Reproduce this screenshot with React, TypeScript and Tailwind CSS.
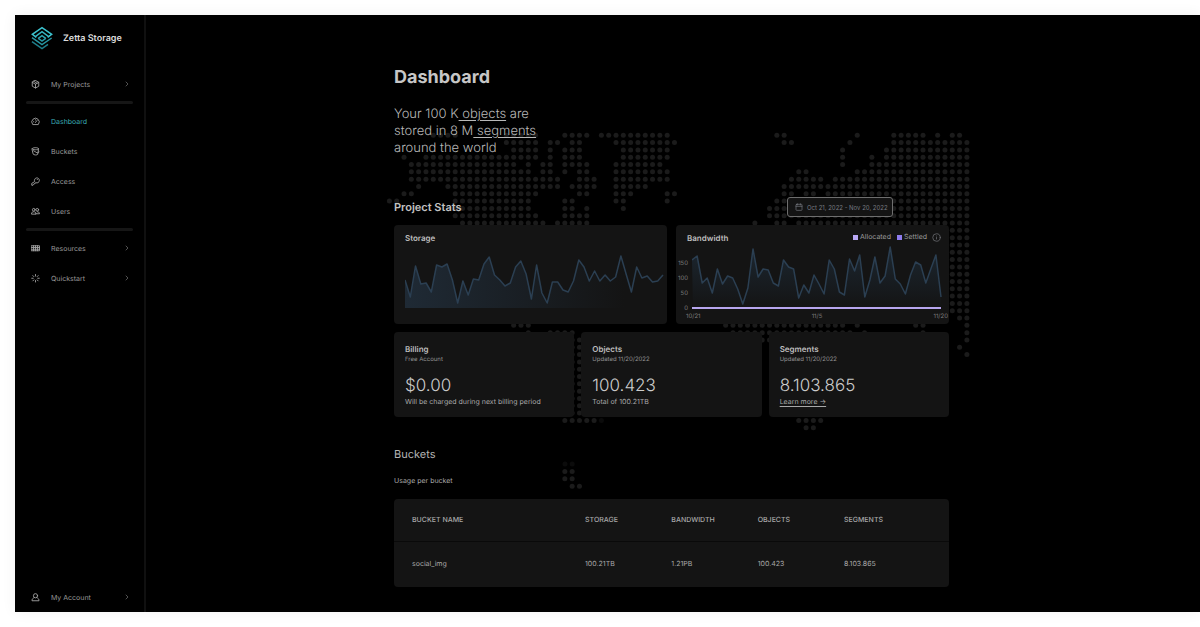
import type { ReactNode } from "react";
import { ChevronRight, Calendar, Info } from "lucide-react";

const storageData = [
  28, 11, 42, 24, 25, 16, 43, 41, 44, 28, 5, 27, 13, 29, 28, 44, 51, 33, 28, 22, 25, 41, 47, 34, 9,
  43, 15, 5, 26, 26, 18, 16, 27, 48, 41, 27, 37, 27, 33, 27, 31, 52, 34, 16, 41, 30, 32, 26, 27, 33,
];

const bandwidthData = [
  48, 52, 25, 30, 15, 39, 24, 32, 30, 19, 4, 20, 59, 31, 39, 38, 25, 22, 48, 41, 39, 10, 23, 15, 33,
  24, 14, 48, 39, 16, 13, 49, 37, 53, 11, 28, 51, 25, 32, 61, 29, 24, 14, 33, 46, 43, 25, 39, 53, 11,
];

// [row, first column, last column] for every run of dots on the world map
const mapRuns = [
  [0, 6, 9], [0, 16, 20], [0, 24, 27], [0, 29, 38], [0, 53, 54], [0, 64, 64], [0, 69, 73], [0, 75, 75], [0, 77, 78],
  [1, 16, 20], [1, 22, 23], [1, 25, 26], [1, 31, 39], [1, 54, 55], [1, 63, 63], [1, 69, 79],
  [2, 17, 20], [2, 22, 22], [2, 24, 26], [2, 32, 38], [2, 62, 62], [2, 68, 79],
  [3, 2, 2], [3, 5, 20], [3, 22, 22], [3, 24, 26], [3, 32, 38], [3, 62, 62], [3, 66, 66], [3, 68, 79],
  [4, 3, 17], [4, 19, 19], [4, 21, 22], [4, 24, 27], [4, 31, 37], [4, 62, 62], [4, 66, 79],
  [5, 3, 19], [5, 21, 22], [5, 24, 24], [5, 26, 27], [5, 31, 38], [5, 56, 57], [5, 64, 79],
  [6, 3, 23], [6, 26, 28], [6, 31, 38], [6, 55, 59], [6, 61, 79],
  [7, 4, 4], [7, 8, 23], [7, 25, 28], [7, 31, 35], [7, 54, 79],
  [8, 2, 3], [8, 9, 20], [8, 26, 27], [8, 31, 33], [8, 38, 39], [8, 54, 55], [8, 57, 58], [8, 60, 79],
  [9, 0, 1], [9, 9, 19], [9, 24, 25], [9, 31, 32], [9, 38, 38], [9, 53, 79],
  [10, 9, 19], [10, 24, 25], [10, 27, 27], [10, 32, 32], [10, 52, 79],
  [11, 9, 20], [11, 24, 27], [11, 52, 79],
  [12, 10, 21], [12, 23, 27], [12, 50, 50], [12, 53, 54], [12, 56, 79],
  [13, 77, 79], [14, 77, 79], [15, 77, 79], [16, 77, 79], [17, 77, 79], [18, 77, 79],
  [19, 77, 79], [20, 77, 79], [21, 77, 79], [22, 77, 79], [23, 77, 79], [24, 77, 79],
  [25, 78, 79], [26, 17, 19], [26, 46, 62], [26, 64, 64], [26, 72, 73], [26, 79, 79],
  [27, 19, 19], [27, 22, 25], [27, 47, 63], [27, 65, 65], [27, 73, 73], [27, 79, 79],
  [28, 25, 26], [28, 51, 52], [28, 79, 79], [29, 25, 26], [29, 78, 78], [30, 25, 26], [30, 79, 79],
  [31, 25, 26], [32, 25, 26], [33, 25, 26], [34, 25, 26], [35, 25, 26], [36, 25, 26], [37, 25, 26], [38, 25, 26],
  [39, 24, 28], [39, 56, 59], [40, 57, 58],
  [46, 24, 25], [47, 24, 25], [48, 25, 26],
];

const bucketRows = [
  { name: "social_img", storage: "100.21TB", bandwidth: "1.21PB", objects: "100.423", segments: "8.103.865" },
];

const linePoints = (data: number[], width: number, base: number) =>
  data.map((v, i) => `${((i * width) / (data.length - 1)).toFixed(1)},${base - v}`).join(" ");

function Icon({ children }: { children: ReactNode }) {
  return (
    <svg className="size-[9px] shrink-0" viewBox="0 0 18 18" fill="none" stroke="#a3a3a3" strokeWidth="1.8" strokeLinejoin="round" strokeLinecap="round">
      {children}
    </svg>
  );
}

const icons = {
  projects: (
    <Icon>
      <path d="M9 1 15.5 4.500v8L9 16 2.500 12.500v-8Z M2.500 4.500 9 8.500l6.500-4M9 8.500V16M5.500 2.700 12 6.500" />
    </Icon>
  ),
  dashboard: (
    <Icon>
      <path d="M3 14.5a7.500 7.500 0 1 1 12 0Z M9 11l3-4M5 9.500h.5M9 5.500v.5" />
    </Icon>
  ),
  buckets: (
    <Icon>
      <path d="M2 3.500c0-3 13-3 13 0l-1.500 11c-1 2-8 2-9 0ZM2 3.500c0 3 13 3 13 0M5 7.500l7 4c3 1 5-1 3-4" />
    </Icon>
  ),
  access: (
    <Icon>
      <path d="M7 8.500a5 5 0 1 1 3 3l-2 .5-1 2-2 .5-1 2H1.500v-3Z M12.500 5h.2" />
    </Icon>
  ),
  users: (
    <Icon>
      <path d="M1 13.500c0-3 2-4 4.500-4s4.500 1 4.500 4ZM10 13.500h7c0-3-2-4-4.500-4" />
      <circle cx="5.500" cy="5.500" r="2.700" />
      <circle cx="12.500" cy="5.500" r="2.700" />
    </Icon>
  ),
  resources: (
    <Icon>
      <path d="M1 3.500h16v10H1ZM1 7h16M1 10.500h16M5 3.500v10M9 3.500v10M13 3.500v10" />
    </Icon>
  ),
  quickstart: (
    <Icon>
      <path d="M9 1v3M9 13v3M1.500 8.500h3M13.500 8.500h3M3.700 3.200l2 2M12.300 11.800l2 2M3.700 13.800l2-2M12.300 5.200l2-2" />
    </Icon>
  ),
  account: (
    <Icon>
      <circle cx="9" cy="5.500" r="4.200" />
      <path d="M6 9.500c-3 1-4 3-4 6h14c0-3-1-5-4-6" />
    </Icon>
  ),
};

function Logo() {
  return (
    <svg className="h-6 w-[22px]" viewBox="0 0 66 72" fill="none" strokeWidth="4.5">
      <path d="M16 34 4 25 33 5l29 20-12 9" stroke="#3cc3cf" />
      <path d="M14 31 33 17l19 14" stroke="#35b4c0" />
      <path d="M21 38l12-9 12 9" stroke="#2fa5b1" />
      <path d="M3 35l30 21 29-20" stroke="#2797a4" />
      <path d="M22 37l11 8 11-8" stroke="#2797a4" />
      <path d="M3 47l30 21 18-13" stroke="#1f7f8c" />
    </svg>
  );
}

function NavItem({ icon, label, active, arrow }: { icon: ReactNode; label: string; active?: boolean; arrow?: boolean }) {
  return (
    <a href="#" className="flex h-[30px] items-center pr-[13px] pl-4">
      {icon}
      <span className={`ml-[11px] flex-1 pt-px text-[7px] leading-[10px] ${active ? "text-[#3aa9b4]" : "text-[#9a9a9a]"}`}>{label}</span>
      {arrow && <ChevronRight className="size-2 text-[#7a7a7a]" />}
    </a>
  );
}

function Divider() {
  return <div className="mx-[11px] my-[2px] h-[3px] rounded bg-[#161616]" />;
}

function Sidebar() {
  return (
    <aside className="flex w-[131px] shrink-0 flex-col border-r-2 border-[#101010]">
      <div className="flex h-[46px] items-center gap-[10px] pl-4">
        <Logo />
        <span className="pt-px text-[9px] font-semibold text-[#dcdcdc]">Zetta Storage</span>
      </div>
      <nav className="mt-2 flex flex-1 flex-col">
        <NavItem icon={icons.projects} label="My Projects" arrow />
        <Divider />
        <NavItem icon={icons.dashboard} label="Dashboard" active />
        <NavItem icon={icons.buckets} label="Buckets" />
        <NavItem icon={icons.access} label="Access" />
        <NavItem icon={icons.users} label="Users" />
        <Divider />
        <NavItem icon={icons.resources} label="Resources" arrow />
        <NavItem icon={icons.quickstart} label="Quickstart" arrow />
        <div className="mt-auto">
          <NavItem icon={icons.account} label="My Account" arrow />
        </div>
      </nav>
    </aside>
  );
}

function WorldMap() {
  const dots: ReactNode[] = [];
  for (const [row, from, to] of mapRuns) {
    for (let col = from; col <= to; col++) {
      dots.push(<circle key={`${row}-${col}`} cx={4.4 + col * 7.31} cy={5.3 + row * 7.31} r="2.5" />);
    }
  }
  return (
    <svg className="pointer-events-none absolute top-[115px] -left-[9px]" width="590" height="370" fill="#1b1b1b" aria-hidden="true">
      {dots}
      <g fillOpacity="0.4">
        <circle cx="180" cy="334" r="2.5" />
        <circle cx="187.2" cy="334" r="2.5" />
        <circle cx="216.4" cy="290.4" r="2.5" />
      </g>
    </svg>
  );
}

function StorageCard() {
  return (
    <section className="h-[99px] rounded bg-[#141414] pt-[7px] pl-[11px]">
      <h3 className="text-[8px] leading-3 font-semibold text-[#bdbdbd]">Storage</h3>
      <svg className="mt-[9px] h-[56px] w-[259px]" viewBox="0 0 259 56" fill="none">
        <defs>
          <linearGradient id="storageFill" x1="0" x2="1">
            <stop offset="0" stopColor="#1f2a35" />
            <stop offset="0.85" stopColor="#141414" />
          </linearGradient>
        </defs>
        <polygon points={`0,55 ${linePoints(storageData, 258, 55)} 258,55`} fill="url(#storageFill)" />
        <polyline points={linePoints(storageData, 258, 55)} stroke="#2b3f52" strokeWidth="1.5" strokeLinejoin="round" />
      </svg>
    </section>
  );
}

function BandwidthCard() {
  return (
    <section className="h-[99px] rounded bg-[#141414] pt-[5px]">
      <div className="flex h-[14px] items-center pr-2 pl-[11px] text-[7px] text-[#9a9a9a]">
        <h3 className="mt-[2px] flex-1 text-[8px] leading-3 font-semibold text-[#bdbdbd]">Bandwidth</h3>
        <span className="mr-[2px] size-[5px] bg-[#b9a8f5]" />
        Allocated
        <span className="mr-[2px] ml-[6px] size-[5px] bg-[#8f7cee]" />
        Settled
        <Info className="ml-[5px] size-[9px] text-[#6f7075]" />
      </div>
      <div className="flex">
        <div className="flex w-4 flex-col items-end pt-3 pr-1 text-[6px] leading-[15px] text-[#7d7d7d]">
          <span>150</span>
          <span>100</span>
          <span>50</span>
          <span>0</span>
        </div>
        <svg className="mt-[2px] h-[64px] w-[250px]" viewBox="0 0 250 64" fill="none">
          <defs>
            <linearGradient id="bandwidthFill" x1="0" x2="0" y1="0" y2="1">
              <stop offset="0" stopColor="#1c2731" />
              <stop offset="1" stopColor="#141414" />
            </linearGradient>
          </defs>
          <polygon points={`1,62 ${linePoints(bandwidthData, 249, 62)} 249,62`} fill="url(#bandwidthFill)" />
          <polyline points={linePoints(bandwidthData, 249, 62)} stroke="#2b3f52" strokeWidth="1.5" strokeLinejoin="round" />
          <rect x="0" y="61" width="249" height="2" fill="#b7a6ee" />
        </svg>
      </div>
      <div className="-mt-[3px] flex justify-between pr-[1px] pl-[10px] text-[6px] leading-2 text-[#7d7d7d]">
        <span>10/21</span>
        <span>11/5</span>
        <span>11/20</span>
      </div>
    </section>
  );
}

function StatCard({ title, note, value, children }: { title: string; note: string; value: string; children: ReactNode }) {
  return (
    <section className="h-[85px] rounded bg-[#141414] px-[11px] pt-[11px]">
      <h3 className="text-[8px] leading-3 font-semibold text-[#bdbdbd]">{title}</h3>
      <p className="text-[6px] leading-[10px] text-[#929292]">{note}</p>
      <p className="mt-[9px] text-[17px] leading-6 font-light text-[#cccccc]">{value}</p>
      <div className="text-[7px] leading-2 text-[#a8a8a8]">{children}</div>
    </section>
  );
}

export default function App() {
  return (
    <div className="flex min-h-screen bg-white pt-[15px] pb-[15px] pl-[15px] font-['Inter',sans-serif] [text-rendering:geometricPrecision]">
      <div className="flex flex-1 bg-black shadow-[0_0_14px_rgba(0,0,0,0.06)]">
        <Sidebar />
        <main className="flex-1 pr-[3px] pb-[25px]">
          <div className="relative mx-auto w-full max-w-[555px] pt-[51px]">
            <WorldMap />
            <div className="relative">
              <h1 className="text-[18px] leading-6 font-bold text-[#c6c6c6]">Dashboard</h1>
              <p className="mt-4 text-[13px] leading-[17px] font-light text-[#b8b8b8]">
                Your 100 K<a href="#" className="underline underline-offset-2"> objects</a> are
                <br />
                stored in 8 M<a href="#" className="underline underline-offset-2"> segments</a>
                <br />
                around the world
              </p>

              <div className="mt-10 flex h-5 items-center justify-between pr-14">
                <h2 className="text-[11px] font-semibold text-[#c2c2c2]">Project Stats</h2>
                <button className="flex h-5 w-[106px] items-center gap-1 rounded-[3px] border border-[#6e6e6e] bg-[#141414] pl-[7px] text-[6px] whitespace-nowrap text-[#777a82]">
                  <Calendar className="size-2" />
                  Oct 21, 2022 - Nov 20, 2022
                </button>
              </div>

              <div className="mt-2 grid grid-cols-2 gap-[9px]">
                <StorageCard />
                <BandwidthCard />
              </div>

              <div className="mt-2 grid grid-cols-3 gap-[7px]">
                <StatCard title="Billing" note="Free Account" value="$0.00">
                  Will be charged during next billing period
                </StatCard>
                <StatCard title="Objects" note="Updated 11/20/2022" value="100.423">
                  Total of 100.21TB
                </StatCard>
                <StatCard title="Segments" note="Updated 11/20/2022" value="8.103.865">
                  <a href="#" className="underline underline-offset-2">Learn more →</a>
                </StatCard>
              </div>

              <h2 className="mt-[29px] text-[11px] leading-4 text-[#b4b4b4]">Buckets</h2>
              <p className="mt-[13px] text-[7px] leading-3 text-[#a8a8a8]">Usage per bucket</p>

              <table className="mt-3 w-full table-fixed overflow-hidden rounded bg-[#141414] text-left text-[7px] text-[#a8a8a8]">
                <thead>
                  <tr className="h-[42px] border-b border-[#0a0a0a]">
                    <th className="w-[191px] pl-[18px] font-medium">BUCKET NAME</th>
                    <th className="font-medium">STORAGE</th>
                    <th className="font-medium">BANDWIDTH</th>
                    <th className="font-medium">OBJECTS</th>
                    <th className="w-[105px] font-medium">SEGMENTS</th>
                  </tr>
                </thead>
                <tbody>
                  {bucketRows.map((row) => (
                    <tr key={row.name} className="h-[46px]">
                      <td className="pl-[18px]">{row.name}</td>
                      <td>{row.storage}</td>
                      <td>{row.bandwidth}</td>
                      <td>{row.objects}</td>
                      <td>{row.segments}</td>
                    </tr>
                  ))}
                </tbody>
              </table>
            </div>
          </div>
        </main>
      </div>
    </div>
  );
}
